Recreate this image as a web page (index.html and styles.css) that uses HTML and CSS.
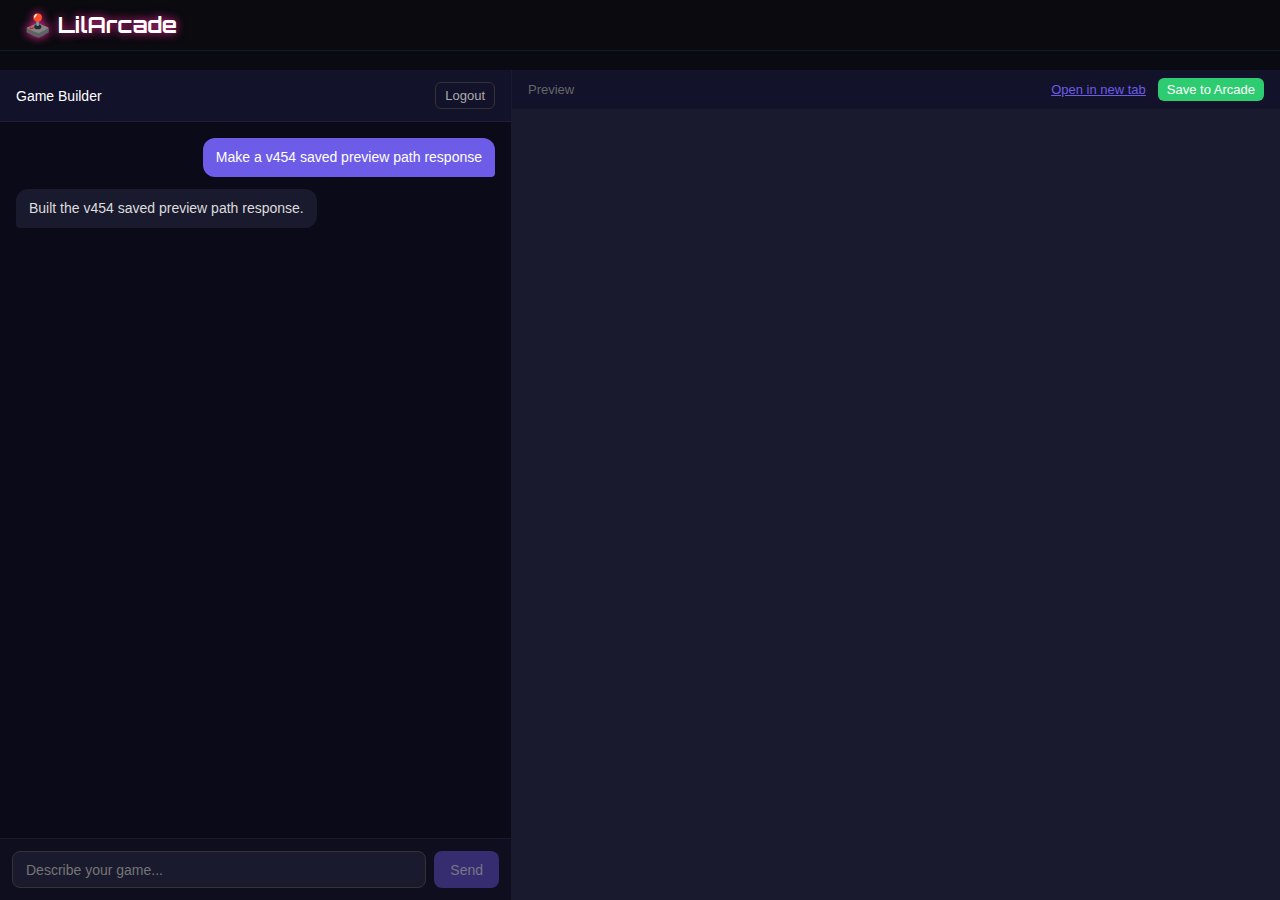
FILE: index.html
```html
<!DOCTYPE html>
<html lang="en">
<head>
    <meta charset="UTF-8">
    <meta name="viewport" content="width=device-width, initial-scale=1.0">
    <title>Game Builder - LilArcade</title>
    <link rel="stylesheet" href="styles.css">
</head>
<body>
    <header class="site-header">
        <a class="logo" href="/">🕹️ LilArcade</a>
    </header>

    <main class="builder">
        <section class="chat-panel">
            <div class="chat-header">
                <h1>Game Builder</h1>
                <button class="logout-btn" type="button">Logout</button>
            </div>
            <div class="messages" id="messages">
                <div class="message user">Make a v454 saved preview path response</div>
                <div class="message assistant">Built the v454 saved preview path response.</div>
            </div>
            <form class="chat-form" id="chatForm">
                <input type="text" id="prompt" placeholder="Describe your game..." aria-label="Describe your game">
                <button class="send-btn" type="submit" disabled>Send</button>
            </form>
        </section>

        <section class="preview-panel">
            <div class="preview-header">
                <span class="preview-title">Preview</span>
                <div class="preview-actions">
                    <a href="/preview" target="_blank">Open in new tab</a>
                    <button class="save-btn" type="button">Save to Arcade</button>
                </div>
            </div>
            <div class="preview-frame"></div>
        </section>
    </main>
</body>
</html>
```
FILE: styles.css
```css
* {
    box-sizing: border-box;
}

body {
    margin: 0;
    height: 100vh;
    display: flex;
    flex-direction: column;
    background: #0a0a12;
    color: #fff;
    font-family: "Liberation Sans", Arial, sans-serif;
    font-size: 14px;
}

/* Site header */
.site-header {
    display: flex;
    align-items: center;
    height: 51px;
    padding: 0 24px;
    margin-bottom: 19px;
    background: #0a0a0f;
    border-bottom: 1px solid #08222b;
}

.logo {
    color: #fff;
    font-family: Orbitron, "DejaVu Sans", sans-serif;
    font-size: 22px;
    font-weight: 700;
    line-height: 28px;
    text-decoration: none;
    text-shadow: 0 0 10px #ff2a9d;
}

/* Layout */
.builder {
    flex: 1;
    min-height: 0;
    display: grid;
    grid-template-columns: 2fr 3fr;
}

/* Chat */
.chat-panel {
    display: flex;
    flex-direction: column;
    background: #0a0a18;
    border-right: 1px solid #1a1a2e;
}

.chat-header {
    display: flex;
    align-items: center;
    justify-content: space-between;
    padding: 12px 16px;
    background: #12122a;
    border-bottom: 1px solid #1e1e34;
}

.chat-header h1 {
    margin: 0;
    font-size: 14px;
    font-weight: 400;
}

button {
    font-family: inherit;
    font-size: 13px;
    cursor: pointer;
}

.logout-btn {
    padding: 5px 9px;
    background: none;
    border: 1px solid #333;
    border-radius: 6px;
    color: #aaa;
}

.messages {
    flex: 1;
    display: flex;
    flex-direction: column;
    gap: 12px;
    padding: 16px;
    overflow-y: auto;
}

.message {
    max-width: 85%;
    padding: 9px 13px;
    border-radius: 12px;
    line-height: 21px;
}

.message.user {
    align-self: flex-end;
    background: #6c5ce7;
    border-bottom-right-radius: 4px;
}

.message.assistant {
    align-self: flex-start;
    background: #1a1a2e;
    color: #ddd;
    border-bottom-left-radius: 4px;
}

.chat-form {
    display: flex;
    gap: 8px;
    padding: 12px;
    background: #0e0e1e;
    border-top: 1px solid #1a1a2e;
}

.chat-form input {
    flex: 1;
    min-width: 0;
    height: 37px;
    padding: 0 13px;
    background: #1a1a2e;
    border: 1px solid #333;
    border-radius: 8px;
    color: #fff;
    font-family: inherit;
    font-size: 14px;
}

.chat-form input::placeholder {
    color: #757575;
}

.send-btn {
    padding: 0 16px;
    background: #6c5ce7;
    border: none;
    border-radius: 8px;
    color: #fff;
    font-size: 14px;
}

.send-btn:disabled {
    background: #352d70;
    color: #777786;
    cursor: not-allowed;
}

/* Preview */
.preview-panel {
    display: flex;
    flex-direction: column;
    background: #1a1a2e;
}

.preview-header {
    display: flex;
    align-items: center;
    justify-content: space-between;
    padding: 8px 16px;
    background: #12122a;
    font-size: 13px;
}

.preview-title {
    color: #666;
}

.preview-actions {
    display: flex;
    align-items: center;
    gap: 12px;
}

.preview-actions a {
    color: #6c5ce7;
}

.save-btn {
    padding: 4px 9px;
    background: #2ecc71;
    border: none;
    border-radius: 6px;
    color: #fff;
}

.preview-frame {
    flex: 1;
}
```
